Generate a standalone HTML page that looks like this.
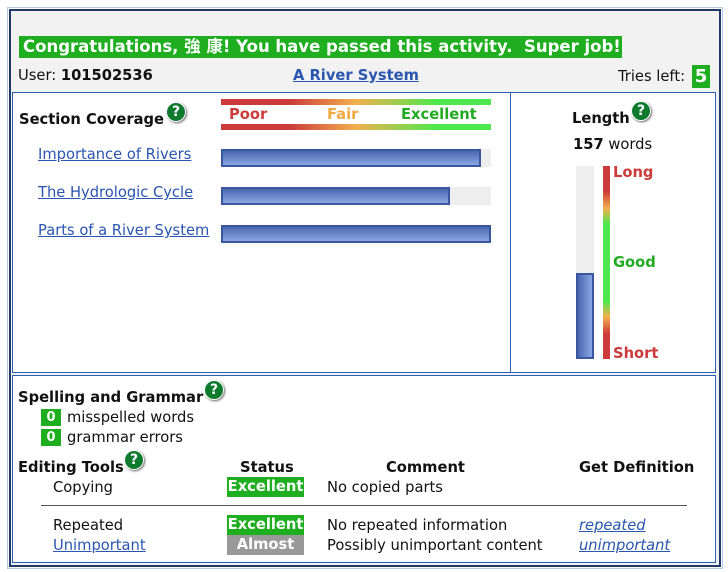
<!DOCTYPE html>
<html><head><meta charset="utf-8"><style>
*{margin:0;padding:0;box-sizing:border-box}
body{width:728px;height:572px;background:#fff;font-family:"DejaVu Sans","Noto Sans CJK SC",sans-serif;font-size:14.7px;color:#111;position:relative;overflow:hidden}
.a{position:absolute;white-space:nowrap}
.b{font-weight:bold}
a{color:#2a56b0;text-decoration:underline}
.help{position:absolute;width:20px;height:20px;border-radius:50%;background:#0e7a2e;border:1px solid #fff;box-shadow:1px 1px 2px #666;color:#fff;font-weight:bold;font-size:14px;line-height:18px;text-align:center}
.bar{position:absolute;left:221px;width:270px;height:18px;background:#eee}
.fill{position:absolute;left:0;top:0;height:18px;border:2px solid #3a56a0;background:linear-gradient(#4a68b0,#8aa6e2)}
.g{background:#1fae1f;color:#fff;font-weight:bold;text-align:center}
</style></head><body>
<div class="a" style="left:7px;top:7px;width:716px;height:562px;border:1px solid #b8c8e0"></div>
<div class="a" style="left:9px;top:9px;width:712px;height:558px;border:2px solid #1f3a6b;background:#f2f2f2"></div>
<div class="a g" style="left:19px;top:36px;width:603px;height:22px;font-size:16.5px;line-height:22px;text-align:left;padding-left:4px">Congratulations, 強 康! You have passed this activity.&nbsp; Super job!</div>
<div class="a" style="left:18px;top:67px">User: <span class="b">101502536</span></div>
<div class="a b" style="left:293px;top:67px"><a>A River System</a></div>
<div class="a" style="left:618px;top:68px">Tries left:</div>
<div class="a g" style="left:692px;top:65px;width:18px;height:23px;font-size:18px;line-height:23px">5</div>

<div class="a" style="left:12px;top:92px;width:704px;height:281px;border:1px solid #2d5fb0;background:#fff"></div>
<div class="a" style="left:510px;top:92px;width:1px;height:281px;background:#2d5fb0"></div>
<div class="a" style="left:12px;top:375px;width:704px;height:188px;border:1px solid #2d5fb0;background:#fff"></div>

<div class="a b" style="left:19px;top:111px">Section Coverage</div>
<div class="help" style="left:166px;top:102px">?</div>
<div class="a" style="left:221px;top:99px;width:270px;height:6px;background:linear-gradient(90deg,#cc3a3a 0%,#cc3a3a 25%,#f2b04e 50%,#4de84d 80%,#4de84d 100%)"></div>
<div class="a" style="left:221px;top:124px;width:270px;height:6px;background:linear-gradient(90deg,#cc3a3a 0%,#cc3a3a 25%,#f2b04e 50%,#4de84d 80%,#4de84d 100%)"></div>
<div class="a b" style="left:229px;top:106px;color:#cc3a3a">Poor</div>
<div class="a b" style="left:327px;top:106px;color:#f0a840">Fair</div>
<div class="a b" style="left:401px;top:106px;color:#22aa22">Excellent</div>

<div class="a" style="left:38px;top:146px"><a>Importance of Rivers</a></div>
<div class="bar" style="top:149px"><div class="fill" style="width:260px"></div></div>
<div class="a" style="left:38px;top:184px"><a>The Hydrologic Cycle</a></div>
<div class="bar" style="top:187px"><div class="fill" style="width:229px"></div></div>
<div class="a" style="left:38px;top:222px"><a>Parts of a River System</a></div>
<div class="bar" style="top:225px"><div class="fill" style="width:270px"></div></div>

<div class="a b" style="left:572px;top:110px">Length</div>
<div class="help" style="left:631px;top:101px">?</div>
<div class="a" style="left:573px;top:136px"><span class="b">157</span> words</div>
<div class="a" style="left:576px;top:166px;width:18px;height:193px;background:#eee"></div>
<div class="a" style="left:576px;top:273px;width:18px;height:86px;border:2px solid #3a56a0;background:linear-gradient(90deg,#4a68b0,#8aa6e2)"></div>
<div class="a" style="left:603px;top:166px;width:7px;height:193px;background:linear-gradient(#cc3a3a 0%,#cc3a3a 13%,#f2b04e 22%,#4de84d 30%,#4de84d 70%,#f2b04e 78%,#cc3a3a 87%,#cc3a3a 100%)"></div>
<div class="a b" style="left:613px;top:164px;color:#cc3a3a">Long</div>
<div class="a b" style="left:613px;top:254px;color:#22aa22">Good</div>
<div class="a b" style="left:613px;top:345px;color:#cc3a3a">Short</div>

<div class="a b" style="left:18px;top:389px">Spelling and Grammar</div>
<div class="help" style="left:204px;top:380px">?</div>
<div class="a g" style="left:41px;top:409px;width:20px;height:17px;font-size:13px;line-height:17px">0</div>
<div class="a" style="left:67px;top:409px">misspelled words</div>
<div class="a g" style="left:41px;top:429px;width:20px;height:17px;font-size:13px;line-height:17px">0</div>
<div class="a" style="left:67px;top:429px">grammar errors</div>

<div class="a b" style="left:18px;top:459px">Editing Tools</div>
<div class="help" style="left:124px;top:450px">?</div>
<div class="a b" style="left:240px;top:459px">Status</div>
<div class="a b" style="left:386px;top:459px">Comment</div>
<div class="a b" style="left:579px;top:459px">Get Definition</div>
<div class="a" style="left:53px;top:479px">Copying</div>
<div class="a g" style="left:227px;top:477px;width:77px;height:20px;line-height:20px">Excellent</div>
<div class="a" style="left:327px;top:479px">No copied parts</div>
<div class="a" style="left:41px;top:505px;width:646px;height:1px;background:#555"></div>
<div class="a" style="left:53px;top:517px">Repeated</div>
<div class="a g" style="left:227px;top:515px;width:77px;height:20px;line-height:20px">Excellent</div>
<div class="a" style="left:327px;top:517px">No repeated information</div>
<div class="a" style="left:579px;top:517px;font-style:italic"><a>repeated</a></div>
<div class="a" style="left:53px;top:537px"><a>Unimportant</a></div>
<div class="a" style="left:227px;top:535px;width:77px;height:20px;line-height:20px;background:#999;color:#fff;font-weight:bold;text-align:center">Almost</div>
<div class="a" style="left:327px;top:537px">Possibly unimportant content</div>
<div class="a" style="left:579px;top:537px;font-style:italic"><a>unimportant</a></div>
</body></html>
